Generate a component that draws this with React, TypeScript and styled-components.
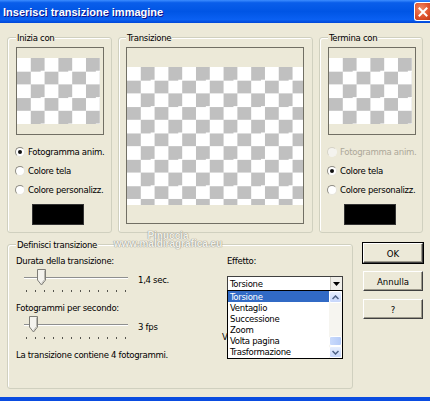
import React from 'react'
import styled, { createGlobalStyle } from 'styled-components'

const GlobalStyle = createGlobalStyle`
  html, body {
    margin: 0;
    padding: 0;
    background: #ECE9D8;
  }
  body {
    font-family: "DejaVu Sans Condensed", "Liberation Sans", Arial, sans-serif;
    font-size: 9.5px;
    letter-spacing: -0.3px;
    color: #000;
  }
  * {
    box-sizing: border-box;
  }
`

const Window = styled.div`
  position: relative;
  width: 430px;
  height: 401px;
  display: flex;
  flex-direction: column;
  background: #ECE9D8;
  border-bottom: 4px solid #0A4CE0;
  overflow: hidden;
`

const TitleBar = styled.div`
  height: 23px;
  flex-shrink: 0;
  display: flex;
  align-items: center;
  padding-left: 3px;
  background: linear-gradient(180deg, #3D8DFF 0%, #0A5EEA 12%, #0055E5 50%, #0A60F2 85%, #0047D8 100%);
`

const Title = styled.span`
  color: #fff;
  font-family: "Liberation Sans", Arial, sans-serif;
  font-weight: bold;
  font-size: 11px;
  letter-spacing: 0;
  text-shadow: 1px 1px #0F1089;
`

const CloseButton = styled.div`
  margin-left: auto;
  width: 16px;
  height: 19px;
  display: flex;
  align-items: center;
  justify-content: center;
  border: 1px solid #fff;
  border-right: none;
  border-radius: 3px 0 0 3px;
  background: radial-gradient(circle at 40% 35%, #F08A66 0%, #E0542E 55%, #C23A17 100%);
`

const Body = styled.div`
  flex: 1;
  display: flex;
  flex-direction: column;
  gap: 6px;
  padding: 9px 7px 8px;
`

const TopRow = styled.div`
  display: flex;
  gap: 6px;
  height: 201px;
`

const BottomRow = styled.div`
  flex: 1;
  display: flex;
  gap: 10px;
`

const Group = styled.fieldset<{ $width?: number; $padRight?: number }>`
  margin: 0;
  min-width: 0;
  ${({ $width }) => ($width ? `width: ${$width}px;` : 'flex: 1;')}
  display: flex;
  flex-direction: column;
  padding: 4px ${({ $padRight }) => $padRight ?? 8}px 7px 8px;
  border: 1px solid #D0D0BF;
  border-radius: 3px;
  box-shadow: inset 1px 1px 0 #fff;
`

const Legend = styled.legend`
  padding: 0 1px;
  line-height: 11px;
  background: #ECE9D8;
`

const Preview = styled.div<{ $square?: boolean }>`
  ${({ $square }) => ($square ? 'width: 88px; height: 88px;' : 'flex: 1;')}
  flex-shrink: 0;
  display: flex;
  align-items: center;
  border: 1px solid #716F64;
  background: #ECE9D8;
`

const Checker = styled.div<{ $w: number; $h: number }>`
  width: ${({ $w }) => $w}px;
  height: ${({ $h }) => $h}px;
  background: repeating-conic-gradient(#C0C0C0 0 25%, #fff 0 50%) 0 0 / 27.6px 26.4px;
`

const RadioList = styled.div`
  margin-top: 7px;
  display: flex;
  flex-direction: column;
`

const RadioRow = styled.div<{ $disabled?: boolean }>`
  height: 19px;
  display: flex;
  align-items: center;
  gap: 3px;
  margin-left: -1px;
  white-space: nowrap;
  color: ${({ $disabled }) => ($disabled ? '#ACA899' : '#000')};
`

const RadioCircle = styled.span<{ $checked?: boolean; $disabled?: boolean }>`
  flex-shrink: 0;
  width: 10px;
  height: 10px;
  border-radius: 50%;
  display: flex;
  align-items: center;
  justify-content: center;
  border: 1px solid;
  border-color: ${({ $disabled }) => ($disabled ? '#D6D3C6 #F4F3EE #F4F3EE #D6D3C6' : '#8E8C84 #E6E4DC #E6E4DC #8E8C84')};
  background: ${({ $disabled }) => ($disabled ? '#F4F3EE' : '#fff')};

  &::after {
    content: '';
    width: 4px;
    height: 4px;
    border-radius: 50%;
    background: ${({ $checked }) => ($checked ? '#111' : 'transparent')};
  }
`

const Swatch = styled.div`
  width: 52px;
  height: 21px;
  margin: 5px 0 0 16px;
  background: #000;
  border: 1px solid #333;
`

const DefineGrid = styled.div`
  display: grid;
  grid-template-columns: 211px 1fr;
`

const Column = styled.div`
  display: flex;
  flex-direction: column;
`

const Fields = styled.div`
  display: flex;
  flex-direction: column;
  gap: 9px;
`

const Field = styled.div`
  display: flex;
  flex-direction: column;
  gap: 2px;
`

const Label = styled.div`
  line-height: 12px;
  white-space: nowrap;
`

const SliderRow = styled.div`
  display: flex;
`

const Slider = styled.div`
  position: relative;
  width: 112px;
  height: 24px;
  margin-left: 4px;
  padding: 8px 4px 0;
`

const Track = styled.div`
  height: 2px;
  border-top: 1px solid #8E8F8F;
  border-bottom: 1px solid #fff;
`

const Ticks = styled.div`
  display: flex;
  justify-content: space-between;
  margin: 11px 2px 0;
`

const Tick = styled.span`
  width: 1px;
  height: 2px;
  background: #55544E;
`

const Thumb = styled.svg`
  position: absolute;
  top: 0;
`

const SliderValue = styled.span`
  margin: 5px 0 0 6px;
  line-height: 12px;
`

const Info = styled.div`
  margin-top: 9px;
  line-height: 12px;
`

const Combo = styled.div`
  position: relative;
  width: 116px;
  height: 15px;
  margin-top: 9px;
  display: flex;
  border: 1px solid #404040;
  background: #fff;
`

const ComboText = styled.span`
  flex: 1;
  padding-left: 2px;
  line-height: 13px;
`

const DropButton = styled.span`
  width: 12px;
  display: flex;
  align-items: center;
  justify-content: center;
  background: #F0EFEA;
  border-left: 1px solid #C8C6BC;
`

const ListBox = styled.div`
  position: absolute;
  top: 100%;
  left: -1px;
  width: 116px;
  height: 69px;
  display: flex;
  border: 1px solid #000;
  background: #fff;
  z-index: 2;
`

const Items = styled.div`
  flex: 1;
  display: flex;
  flex-direction: column;
`

const Item = styled.div<{ $selected?: boolean }>`
  height: 11px;
  line-height: 11px;
  padding-left: 2px;
  white-space: nowrap;
  color: ${({ $selected }) => ($selected ? '#fff' : '#000')};
  background: ${({ $selected }) => ($selected ? '#316AC5' : 'transparent')};
`

const ScrollBar = styled.div`
  width: 13px;
  display: flex;
  flex-direction: column;
  background: #F6F5F0;
`

const ScrollButton = styled.div`
  height: 12px;
  display: flex;
  align-items: center;
  justify-content: center;
  border: 1px solid #fff;
  border-radius: 2px;
  background: linear-gradient(180deg, #E6EEFD 0%, #C6D6FB 100%);
`

const ScrollThumb = styled.div`
  height: 10px;
  margin-top: auto;
  border: 1px solid #fff;
  border-radius: 2px;
  background: linear-gradient(90deg, #C9DAFC 0%, #B5CBF7 100%);
`

const HiddenLabel = styled.div`
  margin: 40px 0 0 -5px;
  line-height: 12px;
`

const Buttons = styled.div`
  width: 60px;
  margin-top: 4px;
  display: flex;
  flex-direction: column;
  gap: 8px;
`

const Button = styled.button<{ $default?: boolean }>`
  height: 20px;
  padding: 0;
  font: inherit;
  color: #000;
  background: #ECE9D8;
  border: 1px solid;
  border-color: #fff #404040 #404040 #fff;
  box-shadow: inset -1px -1px 0 #9D9A8C${({ $default }) => ($default ? ', 0 0 0 1px #000' : '')};
`

const Watermark = styled.div`
  position: absolute;
  left: 112px;
  top: 232px;
  width: 112px;
  text-align: center;
  font-family: "Liberation Sans", Arial, sans-serif;
  font-weight: bold;
  font-size: 10px;
  letter-spacing: 0;
  line-height: 8px;
  color: #F2F1EA;
  text-shadow: 0 0 1px #8E8C82, 0 0 1px #8E8C82;
  pointer-events: none;
`

const effects = ['Torsione', 'Ventaglio', 'Successione', 'Zoom', 'Volta pagina', 'Trasformazione']

type RadioOption = { label: string; checked?: boolean; disabled?: boolean }

const RadioGroup = ({ options }: { options: RadioOption[] }) => (
  <RadioList>
    {options.map((o) => (
      <RadioRow key={o.label} $disabled={o.disabled}>
        <RadioCircle $checked={o.checked} $disabled={o.disabled} />
        {o.label}
      </RadioRow>
    ))}
  </RadioList>
)

const SliderControl = ({ value, min, max, text }: { value: number; min: number; max: number; text: string }) => {
  const left = 4 + ((value - min) / (max - min)) * (104 - 11)
  return (
    <SliderRow>
      <Slider>
        <Track />
        <Ticks>
          {Array.from({ length: 12 }).map((_, i) => (
            <Tick key={i} />
          ))}
        </Ticks>
        <Thumb width="11" height="17" viewBox="0 0 11 17" style={{ left }}>
          <path d="M1.5 0.5 H9.5 V11 L5.5 16 L1.5 11 Z" fill="#F4F3EE" stroke="#7E7D77" />
          <path d="M8.5 1.5 V10.6 L5.5 14.4" fill="none" stroke="#B9B8B0" />
        </Thumb>
      </Slider>
      <SliderValue>{text}</SliderValue>
    </SliderRow>
  )
}

export default function App() {
  return (
    <>
      <GlobalStyle />
      <Window>
        <TitleBar>
          <Title>Inserisci transizione immagine</Title>
          <CloseButton>
            <svg width="10" height="10" viewBox="0 0 10 10">
              <path d="M1.5 1.5 L8.5 8.5 M8.5 1.5 L1.5 8.5" stroke="#fff" strokeWidth="2" strokeLinecap="square" />
            </svg>
          </CloseButton>
        </TitleBar>

        <Body>
          <TopRow>
            <Group $width={105} $padRight={7}>
              <Legend>Inizia con</Legend>
              <Preview $square>
                <Checker $w={83} $h={66} />
              </Preview>
              <RadioGroup
                options={[
                  { label: 'Fotogramma anim.', checked: true },
                  { label: 'Colore tela' },
                  { label: 'Colore personalizz.' },
                ]}
              />
              <Swatch />
            </Group>

            <Group $padRight={8} style={{ paddingLeft: 7, paddingBottom: 8 }}>
              <Legend>Transizione</Legend>
              <Preview>
                <Checker $w={176} $h={138} />
              </Preview>
            </Group>

            <Group $width={104} $padRight={6}>
              <Legend>Termina con</Legend>
              <Preview $square>
                <Checker $w={83} $h={66} />
              </Preview>
              <RadioGroup
                options={[
                  { label: 'Fotogramma anim.', disabled: true },
                  { label: 'Colore tela', checked: true },
                  { label: 'Colore personalizz.' },
                ]}
              />
              <Swatch />
            </Group>
          </TopRow>

          <BottomRow>
            <Group style={{ paddingTop: 5 }}>
              <Legend>Definisci transizione</Legend>
              <DefineGrid>
                <Column>
                  <Fields>
                    <Field>
                      <Label>Durata della transizione:</Label>
                      <SliderControl value={1.4} min={0.1} max={10} text="1,4 sec." />
                    </Field>
                    <Field>
                      <Label>Fotogrammi per secondo:</Label>
                      <SliderControl value={3} min={1} max={50} text="3 fps" />
                    </Field>
                  </Fields>
                  <Info>La transizione contiene 4 fotogrammi.</Info>
                </Column>

                <Column>
                  <Label>Effetto:</Label>
                  <Combo>
                    <ComboText>Torsione</ComboText>
                    <DropButton>
                      <svg width="7" height="4" viewBox="0 0 7 4">
                        <path d="M0 0 H7 L3.5 4 Z" fill="#000" />
                      </svg>
                    </DropButton>
                    <ListBox>
                      <Items>
                        {effects.map((e, i) => (
                          <Item key={e} $selected={i === 0}>
                            {e}
                          </Item>
                        ))}
                      </Items>
                      <ScrollBar>
                        <ScrollButton>
                          <svg width="7" height="5" viewBox="0 0 7 5">
                            <path d="M0.5 4 L3.5 1 L6.5 4" fill="none" stroke="#4D6185" strokeWidth="1.5" />
                          </svg>
                        </ScrollButton>
                        <ScrollThumb />
                        <ScrollButton>
                          <svg width="7" height="5" viewBox="0 0 7 5">
                            <path d="M0.5 1 L3.5 4 L6.5 1" fill="none" stroke="#4D6185" strokeWidth="1.5" />
                          </svg>
                        </ScrollButton>
                      </ScrollBar>
                    </ListBox>
                  </Combo>
                  <HiddenLabel>Velocità:</HiddenLabel>
                </Column>
              </DefineGrid>
            </Group>

            <Buttons>
              <Button $default>OK</Button>
              <Button>Annulla</Button>
              <Button>?</Button>
            </Buttons>
          </BottomRow>
        </Body>

        <Watermark>
          Pinuccia
          <br />
          www.maldiragrafica.eu
        </Watermark>
      </Window>
    </>
  )
}
